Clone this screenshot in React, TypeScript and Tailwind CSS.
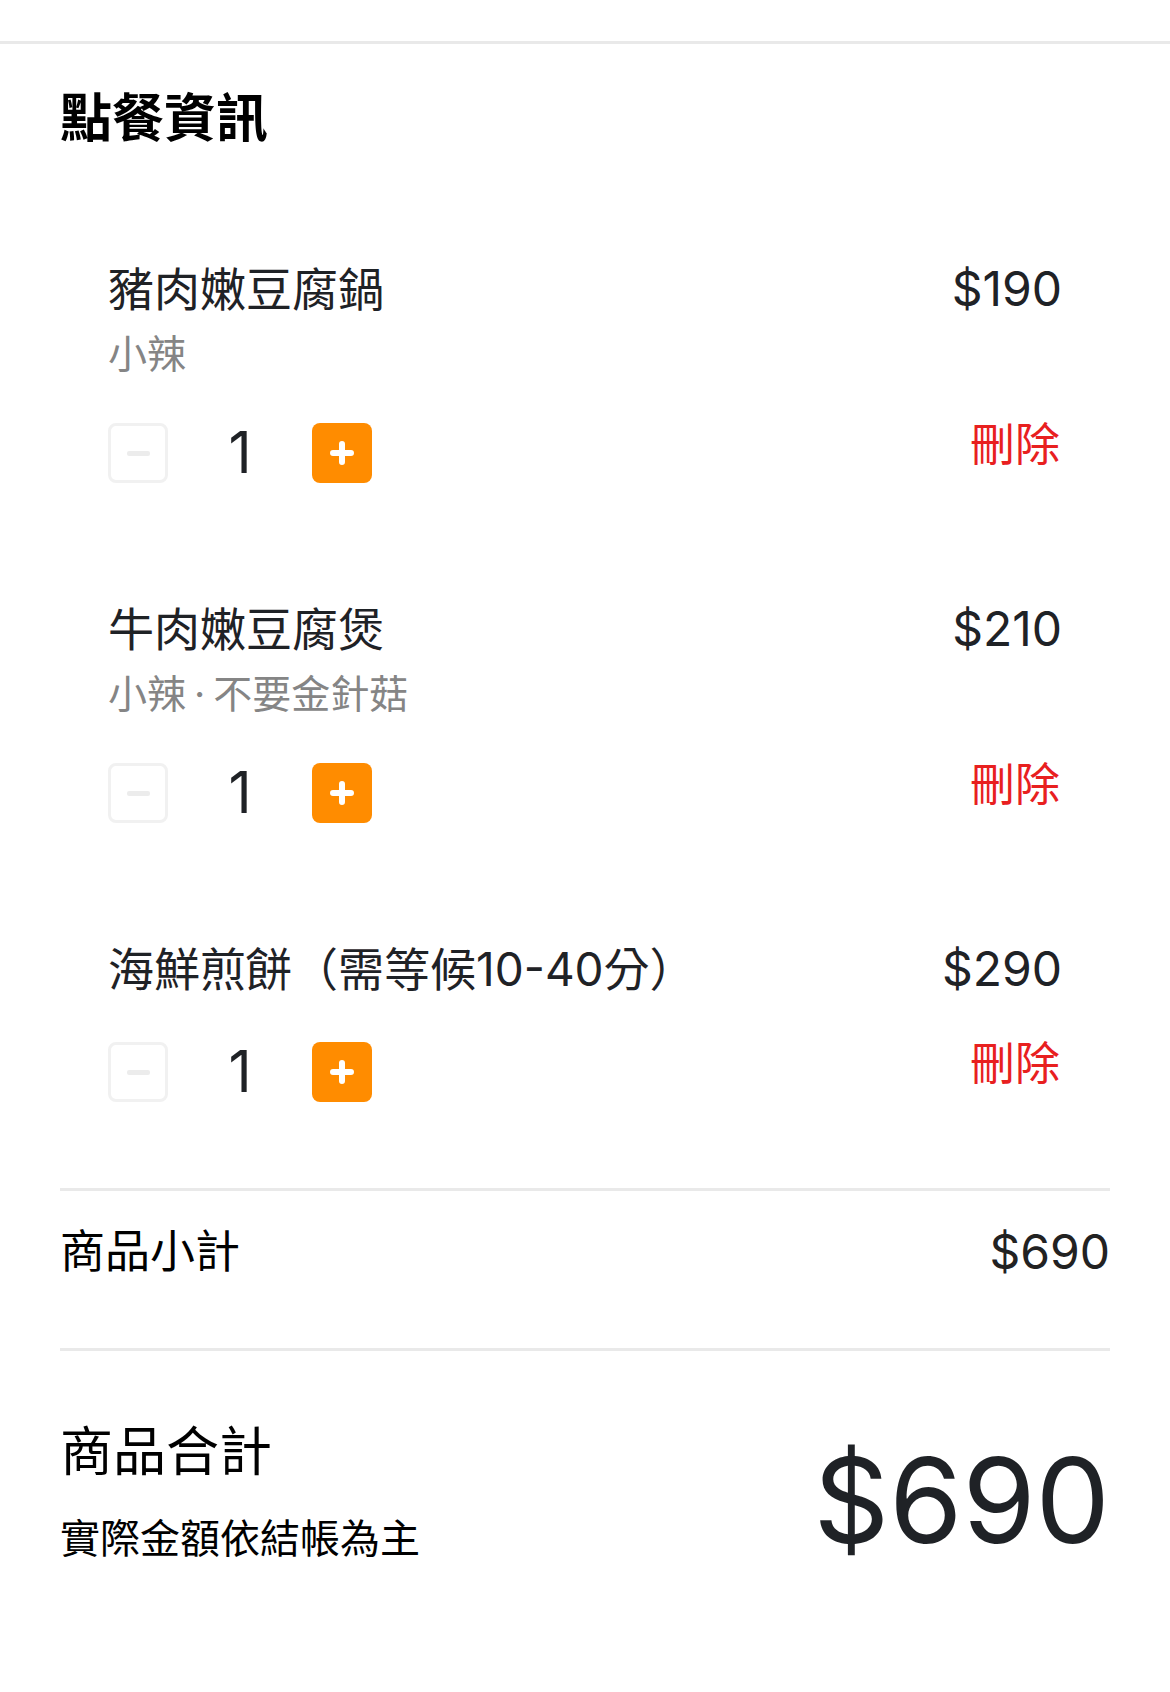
import { Fragment } from "react";

type Item = { name: string; note?: string[]; price: number; qty: number };

const items: Item[] = [
  { name: "豬肉嫩豆腐鍋", note: ["小辣"], price: 190, qty: 1 },
  { name: "牛肉嫩豆腐煲", note: ["小辣", "不要金針菇"], price: 210, qty: 1 },
  { name: "海鮮煎餅（需等候10-40分）", price: 290, qty: 1 },
];

function Stepper({ qty }: { qty: number }) {
  return (
    <div className="flex items-center">
      <button className="flex h-[60px] w-[60px] items-center justify-center rounded-[8px] border-[3px] border-[#f1f1f1] bg-white">
        <span className="h-[5px] w-[23px] rounded-[2px] bg-[#ececec]" />
      </button>
      <span className="w-[144px] text-center text-[57px] leading-[60px] text-[#1f2226]">{qty}</span>
      <button className="flex h-[60px] w-[60px] items-center justify-center rounded-[8px] bg-[#ff8c00]">
        <svg width="24" height="24" viewBox="0 0 24 24" fill="none" stroke="white" strokeWidth="6" strokeLinecap="round">
          <path d="M12 3v18M3 12h18" />
        </svg>
      </button>
    </div>
  );
}

export default function App() {
  return (
    <div className="min-h-[1692px] bg-white font-[Inter,'Noto_Sans_CJK_TC',sans-serif] text-[#1f2226]">
      <div className="h-[41px]" />
      <div className="border-t-[3px] border-[#e9e9e9] px-[60px]">
        {/* 點餐資訊 */}
        <h2 className="mt-[40px] text-[52px] font-bold leading-[70px] text-black">點餐資訊</h2>

        <div className="mt-[105px] flex flex-col gap-[116px] px-[48px]">
          {items.map((it) => (
            <div key={it.name}>
              <div className="flex items-start justify-between">
                <div>
                  <p className="text-[46px] leading-[60px]">{it.name}</p>
                  {it.note && (
                    <p className="mt-[9px] text-[39px] leading-[52px] text-[#858585]">
                      {it.note.map((n, i) => (
                        <Fragment key={n}>
                          {i > 0 && <span className="mx-[8px]">·</span>}
                          {n}
                        </Fragment>
                      ))}
                    </p>
                  )}
                </div>
                <span className="text-[48px] leading-[60px]">${it.price}</span>
              </div>
              <div className="mt-[43px] flex items-start justify-between">
                <Stepper qty={it.qty} />
                <button className="mr-[2px] text-[45px] leading-[44px] text-[#e8201f]">刪除</button>
              </div>
            </div>
          ))}
        </div>

        <div className="mt-[86px] border-t-[3px] border-[#e9e9e9] pb-[66px] pt-[31px]">
          <div className="flex items-center justify-between">
            <span className="text-[45px] leading-[60px] text-black">商品小計</span>
            <span className="text-[48px] leading-[60px] text-[#222]">$690</span>
          </div>
        </div>

        <div className="flex items-center justify-between border-t-[3px] border-[#e9e9e9] pt-[66px]">
          <div className="flex flex-col text-black">
            <span className="text-[53px] leading-[70px]">商品合計</span>
            <span className="mt-[26px] text-[40px] leading-[52px]">實際金額依結帳為主</span>
          </div>
          <span className="pt-[18px] text-[118px] leading-none text-[#1f2226]">$690</span>
        </div>
      </div>
    </div>
  );
}
